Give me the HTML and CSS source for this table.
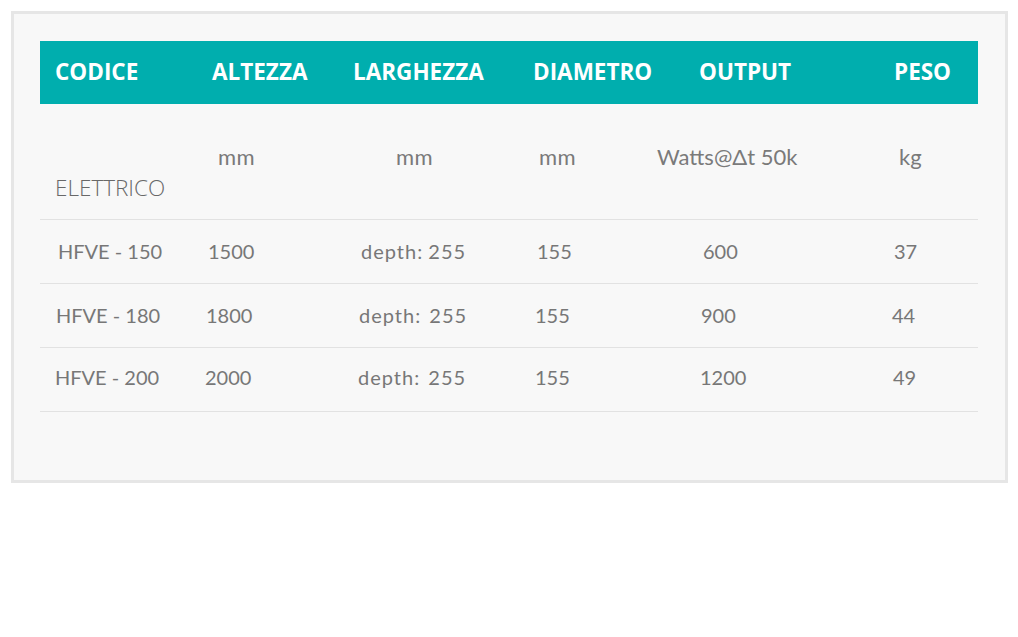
FILE: index.html
```html
<!DOCTYPE html>
<html lang="it">
<head>
<meta charset="utf-8">
<title>Tabella</title>
<link rel="stylesheet" href="styles.css">
</head>
<body>
<div class="panel">
  <div class="specs">
    <div class="row head">
      <div class="cell">CODICE</div>
      <div class="cell">ALTEZZA</div>
      <div class="cell">LARGHEZZA</div>
      <div class="cell">DIAMETRO</div>
      <div class="cell">OUTPUT</div>
      <div class="cell">PESO</div>
    </div>
    <div class="row units">
      <div class="cell type">ELETTRICO</div>
      <div class="cell">mm</div>
      <div class="cell">mm</div>
      <div class="cell">mm</div>
      <div class="cell">Watts@Δt 50k</div>
      <div class="cell">kg</div>
    </div>
    <div class="row data r1">
      <div class="cell">HFVE - 150</div>
      <div class="cell">1500</div>
      <div class="cell depth">depth: 255</div>
      <div class="cell">155</div>
      <div class="cell">600</div>
      <div class="cell">37</div>
    </div>
    <div class="row data r2">
      <div class="cell">HFVE - 180</div>
      <div class="cell">1800</div>
      <div class="cell depth">depth: 255</div>
      <div class="cell">155</div>
      <div class="cell">900</div>
      <div class="cell">44</div>
    </div>
    <div class="row data r3">
      <div class="cell">HFVE - 200</div>
      <div class="cell">2000</div>
      <div class="cell depth">depth: 255</div>
      <div class="cell">155</div>
      <div class="cell">1200</div>
      <div class="cell">49</div>
    </div>
  </div>
</div>
</body>
</html>
```

FILE: styles.css
```css
html, body {
  margin: 0;
  padding: 0;
  background: #ffffff;
}

.panel {
  box-sizing: border-box;
  margin: 11px 0 0 11px;
  width: 997px;
  height: 472px;
  border: 3px solid #e6e6e6;
  background: #f8f8f8;
  padding: 27px 27px 0 26px;
}

.specs {
  width: 938px;
}

.row {
  display: grid;
  grid-template-columns: 165px 153px 177px 165px 192px 86px;
  align-items: center;
}

.cell {
  white-space: nowrap;
}

.head {
  height: 63px;
  background: #00aeae;
  color: #ffffff;
  font-family: "Open Sans", sans-serif;
  font-weight: 700;
  font-size: 22.5px;
  padding-bottom: 2px;
  box-sizing: border-box;
}

.head .cell:nth-child(1) { padding-left: 15px; }
.head .cell:nth-child(2) { padding-left: 7px; }
.head .cell:nth-child(3) { margin-left: -5px; }
.head .cell:nth-child(4) { margin-left: -2px; }
.head .cell:nth-child(5) { margin-left: -1px; }
.head .cell:nth-child(6) { padding-left: 2px; }

.units {
  height: 116px;
  border-bottom: 1px solid #e2e2e2;
  box-sizing: border-box;
  font-family: "Lato", sans-serif;
  font-size: 22px;
  color: #7a7a7a;
  align-items: start;
}

.units .cell {
  padding-top: 39px;
}

.units .type {
  padding-top: 68px;
  padding-left: 15px;
  font-family: "Open Sans", sans-serif;
  font-weight: 300;
  font-size: 22.5px;
  color: #686868;
}

.units .cell:nth-child(2) { padding-left: 13px; letter-spacing: 0.5px; }
.units .cell:nth-child(3) { padding-left: 38px; letter-spacing: 0.5px; }
.units .cell:nth-child(4) { padding-left: 4px; letter-spacing: 0.5px; }
.units .cell:nth-child(5) { margin-left: -43px; }
.units .cell:nth-child(6) { padding-left: 7px; }

.data {
  height: 64px;
  border-bottom: 1px solid #e2e2e2;
  box-sizing: border-box;
  padding-bottom: 2px;
  font-family: "Lato", sans-serif;
  font-size: 20px;
  color: #777777;
}

.data .depth {
  letter-spacing: 1px;
  word-spacing: 2px;
}

.r1 .cell:nth-child(1) { padding-left: 18px; }
.r1 .cell:nth-child(2) { padding-left: 3px; }
.r1 .cell:nth-child(3) { padding-left: 3px; word-spacing: -1px; }
.r1 .cell:nth-child(4) { padding-left: 2px; }
.r1 .cell:nth-child(5) { padding-left: 3px; }
.r1 .cell:nth-child(6) { padding-left: 2px; }

.r2 .cell:nth-child(1) { padding-left: 16px; }
.r2 .cell:nth-child(2) { padding-left: 1px; }
.r2 .cell:nth-child(3) { padding-left: 1px; }
.r2 .cell:nth-child(5) { padding-left: 1px; }

.r3 { padding-bottom: 6px; }
.r3 .cell:nth-child(1) { padding-left: 15px; }
.r3 .cell:nth-child(6) { padding-left: 1px; }
```
